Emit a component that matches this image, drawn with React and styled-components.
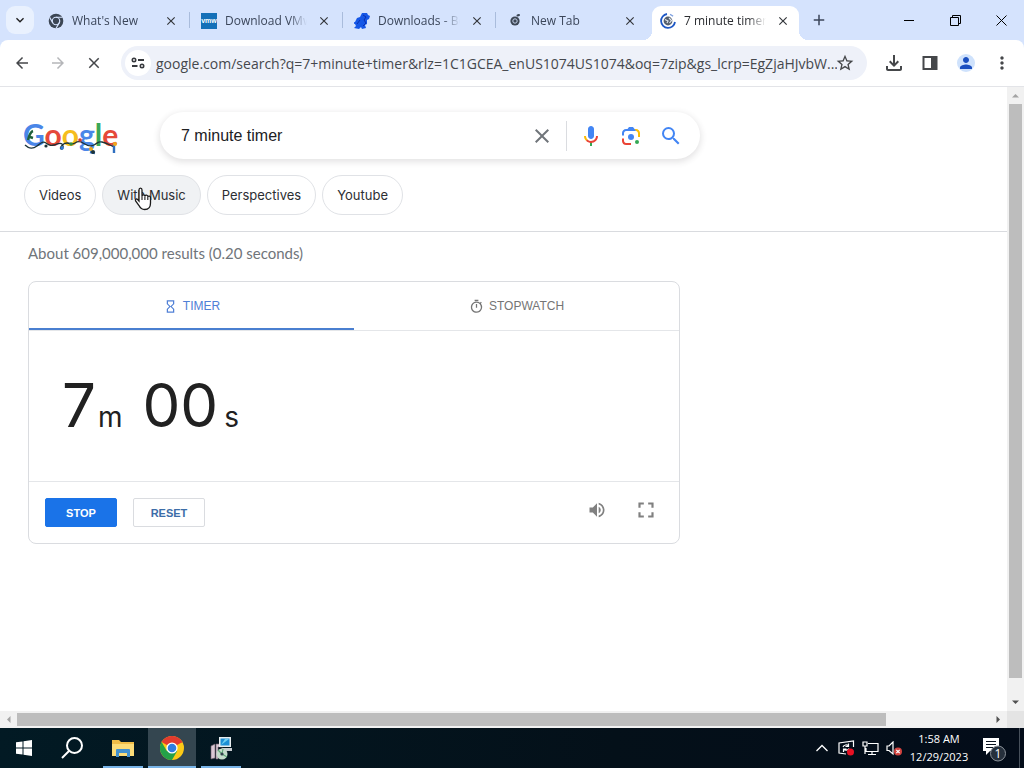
import React, { useState } from 'react';
import styled, { createGlobalStyle, css } from 'styled-components';
import {
  MdArrowBack, MdArrowForward, MdClose, MdStarBorder, MdOutlineFileDownload, MdPerson, MdMoreVert,
  MdSearch, MdHourglassEmpty, MdOutlineTimer, MdVolumeUp, MdFullscreen, MdExpandMore, MdAdd,
} from 'react-icons/md';

const GlobalStyle = createGlobalStyle`
  * { box-sizing: border-box; }
  body { margin: 0; background: #fff; font-family: "Liberation Sans", Arial, sans-serif; }
  button, input { font: inherit; color: inherit; border: 0; padding: 0; margin: 0; background: none; outline: none; }
  svg { display: block; flex: none; }
`;

const Screen = styled.div`
  display: flex;
  flex-direction: column;
  min-height: 100vh;
`;

const IconButton = styled.button`
  display: flex;
  align-items: center;
  justify-content: center;
  flex: none;
  width: ${props => props.$size || 28}px;
  height: ${props => props.$size || 28}px;
  color: ${props => props.$color || '#45474a'};
`;

/* tab strip */

const TabStrip = styled.header`
  display: flex;
  align-items: center;
  height: 40px;
  padding-left: 6px;
  background: #d5e3fd;
  font-family: "Open Sans", "Noto Sans", sans-serif;
  font-size: 12px;
`;

const TabSearch = styled(IconButton)`
  margin-right: 3px;
  border-radius: 9px;
  background: #e9f1fe;
  color: #1f1f1f;
`;

const NewTabButton = styled(IconButton)`
  margin-left: 3px;
  color: #3b465a;
`;

const Tab = styled.div`
  position: relative;
  display: flex;
  align-items: center;
  flex: 0 1 153px;
  min-width: 0;
  height: 34px;
  margin-top: 6px;
  padding: 0 11px 5px;
  color: #3b465a;

  ${props => props.$line && css`
    &::after {
      content: '';
      position: absolute;
      right: 0;
      top: 6px;
      width: 1px;
      height: 16px;
      background: #a9bcdc;
    }
  `}

  ${props => props.$active && css`
    margin-left: 3px;
    margin-right: 3px;
    flex-basis: 147px;
    padding: 0 8px 5px;
    border-radius: 9px 9px 0 0;
    background: #fff;
    color: #2b2d31;

    &::before, &::after {
      content: '';
      position: absolute;
      bottom: 0;
      width: 9px;
      height: 9px;
    }
    &::before {
      left: -9px;
      background: radial-gradient(circle at 0 0, transparent 9px, #fff 9px);
    }
    &::after {
      right: -9px;
      background: radial-gradient(circle at 100% 0, transparent 9px, #fff 9px);
    }
  `}
`;

const TabTitle = styled.span`
  flex: 1;
  min-width: 0;
  margin: 0 9px 0 8px;
  overflow: hidden;
  white-space: nowrap;
  line-height: 18px;
  mask-image: linear-gradient(to right, #000 calc(100% - 18px), transparent);
`;

const WindowControls = styled.div`
  display: flex;
  margin-left: auto;
`;

const WindowButton = styled.button`
  display: flex;
  align-items: center;
  justify-content: center;
  width: 46px;
  height: 40px;
`;

/* toolbar */

const ToolbarBack = styled.div`
  background: #d5e3fd;
`;

const Toolbar = styled.nav`
  display: flex;
  align-items: center;
  gap: 8px;
  height: 47px;
  padding: 0 8px;
  border-bottom: 1px solid #e3e4e8;
  border-radius: 8px 8px 0 0;
  background: #fff;
`;

const Omnibox = styled.div`
  display: flex;
  align-items: center;
  flex: 1;
  min-width: 0;
  height: 34px;
  margin: 0 5px;
  padding: 0 14px 0 4px;
  border-radius: 17px;
  background: #eef1f9;
`;

const SiteInfo = styled(IconButton)`
  margin-right: 5px;
  border-radius: 50%;
  background: #fff;
`;

const UrlInput = styled.input`
  flex: 1;
  min-width: 0;
  height: 24px;
  color: #45484d;
  font-family: "Open Sans", "Noto Sans", sans-serif;
  font-size: 14px;
`;

const Avatar = styled.span`
  width: 18px;
  height: 18px;
  border-radius: 50%;
  background: #cfe2fc;
  color: #1b4fc0;
`;

/* page with its scrollbars */

const Viewport = styled.div`
  display: grid;
  grid-template-columns: minmax(0, 1fr) 17px;
  grid-template-rows: 1fr 17px;
  flex: 1;
`;

const Page = styled.main`
  min-width: 0;
`;

const ScrollTrack = styled.div`
  display: flex;
  flex-direction: ${props => (props.$vertical ? 'column' : 'row')};
  background: #f1f1f1;
`;

const ScrollArrow = styled.button`
  display: flex;
  align-items: center;
  justify-content: center;
  flex: none;
  width: 17px;
  height: 17px;
  color: ${props => (props.$dim ? '#a3a3a3' : '#505050')};
`;

const ScrollLane = styled.div`
  display: flex;
  flex-direction: ${props => (props.$vertical ? 'column' : 'row')};
  flex: 1;
  padding: ${props => (props.$vertical ? '0 2px' : '2px 0')};
`;

const ScrollThumb = styled.div`
  flex: 0 0 ${props => props.$length};
  background: #bdbdbd;
`;

const ScrollCorner = styled.div`
  background: #e4e4e4;
`;

/* search header */

const SearchHeader = styled.div`
  padding: 25px 24px 16px;
  border-bottom: 1px solid #d9dbdf;
`;

const SearchRow = styled.div`
  display: flex;
  align-items: center;
`;

const LogoLink = styled.a`
  flex: none;
  width: 96px;
  margin-right: 40px;
`;

const SearchBox = styled.form`
  display: flex;
  align-items: center;
  flex: 0 1 540px;
  height: 47px;
  padding: 0 17px 0 21px;
  border-radius: 24px;
  background: #fff;
  box-shadow: 0 2px 6px 1px rgba(64, 60, 67, 0.14);
`;

const SearchInput = styled.input`
  flex: 1;
  min-width: 0;
  height: 34px;
  color: #202124;
  font-size: 16px;
`;

const SearchDivider = styled.span`
  width: 1px;
  height: 30px;
  margin: 0 12px;
  background: #dadce0;
`;

const SearchTools = styled.div`
  display: flex;
  gap: 16px;
`;

const Chips = styled.div`
  display: flex;
  gap: 6px;
  margin-top: 16px;
`;

const Chip = styled.a`
  position: relative;
  height: 40px;
  padding: 0 14px;
  border: 1px solid #e0e2e6;
  border-radius: 20px;
  background: ${props => (props.$hover ? '#f0f2f4' : '#fff')};
  color: #2c2e32;
  font-family: Inter, sans-serif;
  font-size: 13px;
  line-height: 38px;
  text-decoration: none;
  white-space: nowrap;
`;

const HandPointer = styled.svg`
  position: absolute;
  left: 31px;
  top: 11px;
`;

/* results */

const Results = styled.section`
  padding: 12px 28px;
`;

const Stats = styled.p`
  margin: 0 0 18px;
  color: #70757a;
  font-family: Lato, sans-serif;
  font-size: 15px;
  line-height: 19px;
`;

const Card = styled.div`
  max-width: 652px;
  border: 1px solid #dadce0;
  border-radius: 8px;
`;

const CardTabs = styled.div`
  display: flex;
  border-bottom: 1px solid #e4e6e9;
`;

const CardTab = styled.button`
  display: flex;
  align-items: center;
  justify-content: center;
  gap: 5px;
  flex: 1;
  height: 48px;
  padding-top: 2px;
  border-bottom: 2px solid ${props => (props.$active ? '#4a7fd0' : 'transparent')};
  color: ${props => (props.$active ? '#5080d6' : '#757575')};
  font-size: 12px;
`;

const Clock = styled.div`
  display: flex;
  align-items: baseline;
  height: 150px;
  padding: 38px 33px 0;
  color: #212121;
  font-family: Inter, sans-serif;
`;

const Digits = styled.span`
  font-size: 60px;
  line-height: 72px;
`;

const Unit = styled.span`
  margin: ${props => (props.$last ? '0 0 0 6px' : '0 20px 0 2px')};
  font-size: 28px;
`;

const Controls = styled.div`
  display: flex;
  align-items: flex-start;
  gap: 16px;
  padding: 16px;
  border-top: 1px solid #e4e6e9;
`;

const ActionButton = styled.button`
  width: 72px;
  height: 29px;
  border: 1px solid ${props => (props.$primary ? '#1a73e8' : '#dadce0')};
  border-radius: 2px;
  background: ${props => (props.$primary ? '#1a73e8' : '#fff')};
  color: ${props => (props.$primary ? '#fff' : '#3c6da8')};
  font-size: 11px;
  font-weight: bold;
`;

const CardTools = styled.div`
  display: flex;
  gap: 25px;
  margin-left: auto;
  margin-right: 5px;
`;

/* taskbar */

const Taskbar = styled.footer`
  display: flex;
  height: 40px;
  background: linear-gradient(to right, #021a24, #041019 60%, #030c19);
  color: #fff;
`;

const TaskButton = styled.button`
  display: flex;
  align-items: center;
  justify-content: center;
  width: 48px;
  height: 40px;
`;

const AppButton = styled(TaskButton)`
  margin-left: 1px;
  background: ${props => (props.$active ? '#344650' : 'none')};
  box-shadow: inset 0 -2px 0 ${props => (props.$active ? '#78b4e8' : 'transparent')};

  ${props => !props.$active && css`
    background: linear-gradient(#78b4e8, #78b4e8) center bottom / 40px 2px no-repeat;
  `}
`;

const Apps = styled.div`
  display: flex;
  margin-left: 2px;
`;

const Tray = styled.div`
  display: flex;
  align-items: center;
  margin-left: auto;
`;

const TrayButton = styled.button`
  display: flex;
  align-items: center;
  justify-content: center;
  width: 24px;
  height: 40px;
`;

const DateTime = styled.div`
  width: 66px;
  font-family: "Open Sans", "Noto Sans", sans-serif;
  font-size: 11px;
  line-height: 18px;
  text-align: center;
`;

const Notices = styled(TaskButton)`
  width: 47px;
  padding: 2px 3px 0 0;
`;

const ShowDesktop = styled.button`
  width: 5px;
  height: 40px;
  border-left: 1px solid #47505b;
`;

const ChromeGlyph = () => (
  <svg width="16" height="16" viewBox="0 0 24 24">
    <circle cx="12" cy="12" r="11" fill="#3c4654" />
    <circle cx="12" cy="12" r="5.6" fill="none" stroke="#d5e3fd" strokeWidth="1.8" />
    <path d="M12 6.4h10M7.2 14.8 2.4 6.4M16.8 14.8l-4.9 8.4" stroke="#d5e3fd" strokeWidth="1.8" />
  </svg>
);

const VmwareGlyph = () => (
  <svg width="16" height="16" viewBox="0 0 16 16">
    <rect width="16" height="16" fill="#1470b8" />
    <text x="8" y="10" textAnchor="middle" fill="#fff" fontFamily="Liberation Sans" fontWeight="bold" fontSize="7">vmw</text>
  </svg>
);

const FigureGlyph = () => (
  <svg width="16" height="16" viewBox="0 0 16 16">
    <path d="M8 0h5l1 2 2 1-1 3-2 1v4l-2 1 1 3-4 1-1-2-2 2-5-1 2-2-1-2-3-1 3-1 2-4 3-1z" fill="#1557e6" />
    <path d="M9 2l3 2-2 3 2 3-3 3M6 7l-3 4" stroke="#0a2fb0" strokeWidth="1" fill="none" />
  </svg>
);

const NewTabGlyph = () => (
  <svg width="16" height="16" viewBox="0 0 16 16">
    <circle cx="8" cy="8" r="4.6" fill="#3c4654" />
    <circle cx="8" cy="8" r="2.2" fill="none" stroke="#c6d3ec" />
    <path d="M10.5 2.5 12 2" stroke="#3c4654" strokeWidth="2" strokeLinecap="round" />
  </svg>
);

const LoadingGlyph = () => (
  <svg width="16" height="16" viewBox="0 0 16 16">
    <path d="M7 1a7 7 0 1 0 8 8" fill="none" stroke="#1d57c4" strokeWidth="1.8" />
    <path d="M10 1.3a7 7 0 0 1 3 2" fill="none" stroke="#7c9fe0" strokeWidth="1.4" />
    <circle cx="8" cy="8" r="4.4" fill="#56606e" />
    <path d="M5 6.5 8 8l-1 2M9 5l2.5 2.5L9.5 10" stroke="#dfe4ea" strokeWidth="1.2" fill="none" />
  </svg>
);

const TuneGlyph = () => (
  <svg width="14" height="12" viewBox="0 0 14 12" fill="none" stroke="#37393d" strokeWidth="1.8">
    <circle cx="3" cy="3" r="1.7" strokeWidth="1.6" />
    <path d="M7 3h6M1 9h5.5" />
    <circle cx="11" cy="9" r="1.7" strokeWidth="1.6" />
  </svg>
);

const SidePanelGlyph = () => (
  <svg width="16" height="14" viewBox="0 0 16 14">
    <rect x="1.5" y="1" width="13" height="12" fill="none" stroke="#45474a" strokeWidth="2" />
    <rect x="9" y="1" width="6" height="12" fill="#45474a" />
  </svg>
);

const MicGlyph = () => (
  <svg width="24" height="24" viewBox="0 0 24 24">
    <path fill="#4285f4" d="m12 15c1.66 0 3-1.31 3-2.97v-7.02c0-1.66-1.34-3.01-3-3.01s-3 1.34-3 3.01v7.02c0 1.66 1.34 2.97 3 2.97z" />
    <path fill="#34a853" d="m11 18.08h2v3.92h-2z" />
    <path fill="#fbbc04" d="m7.05 16.87c-1.27-1.33-2.05-2.83-2.05-4.87h2c0 1.45 0.56 2.42 1.47 3.38v0.32l-1.15 1.18z" />
    <path fill="#ea4335" d="m12 16.93a4.97 5.25 0 0 1 -3.54 -1.55l-1.41 1.49c1.26 1.34 3.02 2.13 4.95 2.13 3.87 0 6.99-2.92 6.99-7h-1.99c0 2.92-2.24 4.93-5 4.93z" />
  </svg>
);

const LensGlyph = () => (
  <svg width="24" height="24" viewBox="0 0 192 192">
    <circle fill="#34a853" cx="144" cy="144" r="16" />
    <circle fill="#4285f4" cx="96" cy="104" r="24" />
    <path fill="#ea4335" d="M24,135.2c0,18.11,14.69,32.8,32.8,32.8H96v-16l-40.1-0.1c-8.8,0-15.9-8.19-15.9-17.9v-18H24V135.2z" />
    <path fill="#fbbc04" d="M168,72.8c0-18.11-14.69-32.8-32.8-32.8H116l20,16c8.8,0,16,8.29,16,18v30h16V72.8z" />
    <path fill="#4285f4" d="M112,24l-32,0L68,40H56.8C38.69,40,24,54.69,24,72.8V92h16V74c0-9.71,7.2-18,16-18h80L112,24z" />
  </svg>
);

const HolidayLogo = () => (
  <svg width="96" height="40" viewBox="0 0 96 40" role="img" aria-label="Google">
    <text x="-1" y="30" fontFamily="Lato, sans-serif" fontWeight="bold" fontSize="30">
      <tspan fill="#4a86e8">G</tspan>
      <tspan fill="#e5493a">o</tspan>
      <tspan fill="#f5bd1c">o</tspan>
      <tspan fill="#4a86e8">g</tspan>
      <tspan fill="#3aa757">l</tspan>
      <tspan fill="#e5493a">e</tspan>
    </text>
    <path
      d="M1 29c4 4 8 4 12 1s6-5 9-3 4 3 8 2 6-3 8-1 1 6-1 5 2-6 6-6 5 2 8 0 5-2 8 0 7 4 11 2 4-4 8-3 6 2 8 3l4 2"
      fill="none" stroke="#1d3338" strokeWidth="1.3"
    />
    <path d="M4 24c1-4 2-8 5-9M6 21l3 1" stroke="#20603c" strokeWidth="2.4" fill="none" />
    <path d="M90 28v9M66 36l5 1" stroke="#2f6fc0" strokeWidth="2.4" />
    <circle cx="38" cy="32" r="1.8" fill="#2f7bd6" />
    <circle cx="22" cy="30" r="1.6" fill="#1d3338" />
    <circle cx="47" cy="28" r="1.8" fill="#35903f" />
    <circle cx="56" cy="24" r="1.8" fill="#d33b2c" />
    <circle cx="67" cy="33" r="2" fill="#f0a81c" />
    <circle cx="69" cy="36" r="2" fill="#1d3338" />
    <circle cx="91" cy="28" r="2" fill="#f0a81c" />
  </svg>
);

const Hand = () => (
  <HandPointer width="20" height="24" viewBox="0 0 20 24">
    <path
      d="M5 14V3c0-2.6 3-2.6 3 0v6c.3-1.7 2.9-1.6 2.9.2.5-1.5 2.9-1.3 2.9.6.6-1.2 2.7-.9 2.7.9v5.3c0 4-2 6.5-5.8 6.5-3 0-4.500-1.500-5.700-4L1.600 14c-.7-1.700.8-2.700 2-1.500z"
      fill="#fff" stroke="#1b1b1b" strokeWidth="1.3"
    />
    <path d="M8 9v4M10.900 9.500V13M13.800 10v3" stroke="#1b1b1b" strokeWidth="1.1" />
  </HandPointer>
);

const ChromeLogo = () => (
  <svg width="24" height="24" viewBox="0 0 24 24">
    <circle cx="12" cy="12" r="12" fill="#fbc916" />
    <path d="M12 12 1.6 6A12 12 0 0 1 22.4 6z" fill="#e33b2e" />
    <path d="M1.6 6A12 12 0 0 0 12 24l5.200-9L12 12 6.800 15z" fill="#24a148" />
    <path d="M12 6.5h10.600L22.400 6 12 4z" fill="#e33b2e" />
    <circle cx="12" cy="12" r="5.6" fill="#fff" />
    <circle cx="12" cy="12" r="4.3" fill="#2f7de1" />
  </svg>
);

const FolderLogo = () => (
  <svg width="22" height="20" viewBox="0 0 22 20">
    <path d="M0 2h7l2 2h13v14H0z" fill="#f0bd48" />
    <path d="M0 6h22v12H0z" fill="#fcdc78" />
    <path d="M4 19v-7q0-1 1-1h12q1 0 1 1v7h-3v-4H7v4z" fill="#4291cf" />
  </svg>
);

const InstallerLogo = () => (
  <svg width="24" height="24" viewBox="0 0 24 24">
    <path d="M2 10l4-2v14l-4 1zM7 8h7v3H9v12H7z" fill="#d9c8d4" stroke="#70606c" strokeWidth=".6" />
    <rect x="10" y="1" width="12" height="10" fill="#e8eef0" />
    <rect x="11.5" y="2.5" width="9" height="7" fill="#1c8fd6" />
    <path d="M12 9l4-6h4z" fill="#6fd0f2" />
    <path d="M12 12h11v3h-6z" fill="#c8ccd0" />
    <circle cx="13" cy="18" r="5.5" fill="#c4dccb" />
    <path d="M13 18l-4-4M13 18l5 3M13 18l1-5" stroke="#5fa878" strokeWidth="1.2" />
    <circle cx="13" cy="18" r="1.6" fill="#34444c" />
  </svg>
);

const Arrow = ({ turn }) => (
  <svg width="7" height="7" viewBox="0 0 7 7">
    <path d="M0 5.5 3.5 2 7 5.5z" fill="currentColor" transform={`rotate(${turn} 3.5 3.5)`} />
  </svg>
);

const TABS = [
  { title: "What's New", icon: <ChromeGlyph />, line: true },
  { title: 'Download VMware', icon: <VmwareGlyph />, line: true },
  { title: 'Downloads - Bochs', icon: <FigureGlyph />, line: true },
  { title: 'New Tab', icon: <NewTabGlyph /> },
  { title: '7 minute timer - Google', icon: <LoadingGlyph />, active: true },
];

const CHIPS = ['Videos', 'With Music', 'Perspectives', 'Youtube'];

const URL_TEXT = 'google.com/search?q=7+minute+timer&rlz=1C1GCEA_enUS1074US1074&oq=7zip&gs_lcrp=EgZjaHJvbW...';

const BrowserTabs = () => (
  <TabStrip>
    <TabSearch aria-label="Search tabs"><MdExpandMore size={16} /></TabSearch>
    {TABS.map(tab => (
      <Tab key={tab.title} $active={tab.active} $line={tab.line}>
        {tab.icon}
        <TabTitle>{tab.title}</TabTitle>
        <IconButton $size={16} $color="#33363b" aria-label="Close tab"><MdClose size={14} /></IconButton>
      </Tab>
    ))}
    <NewTabButton aria-label="New tab"><MdAdd size={18} /></NewTabButton>
    <WindowControls>
      <WindowButton aria-label="Minimize">
        <svg width="10" height="10"><path d="M0 5.5h10" stroke="#000" /></svg>
      </WindowButton>
      <WindowButton aria-label="Restore">
        <svg width="11" height="11" fill="none" stroke="#000"><path d="M.5 2.5h8v8h-8zM2.5 2.5v-2h8v8h-2" /></svg>
      </WindowButton>
      <WindowButton aria-label="Close">
        <svg width="11" height="11"><path d="M.5.5l10 10M10.5.5l-10 10" stroke="#000" /></svg>
      </WindowButton>
    </WindowControls>
  </TabStrip>
);

const BrowserToolbar = () => (
  <ToolbarBack>
    <Toolbar>
      <IconButton aria-label="Back"><MdArrowBack size={18} /></IconButton>
      <IconButton $color="#b5b6b9" aria-label="Forward"><MdArrowForward size={18} /></IconButton>
      <IconButton aria-label="Stop loading"><MdClose size={18} /></IconButton>
      <Omnibox>
        <SiteInfo $size={26} aria-label="Site information"><TuneGlyph /></SiteInfo>
        <UrlInput aria-label="Address" defaultValue={URL_TEXT} />
        <IconButton $size={16} aria-label="Bookmark"><MdStarBorder size={20} /></IconButton>
      </Omnibox>
      <IconButton aria-label="Downloads"><MdOutlineFileDownload size={24} /></IconButton>
      <IconButton aria-label="Side panel"><SidePanelGlyph /></IconButton>
      <IconButton aria-label="Profile"><Avatar><MdPerson size={18} /></Avatar></IconButton>
      <IconButton aria-label="Menu"><MdMoreVert size={20} /></IconButton>
    </Toolbar>
  </ToolbarBack>
);

const SearchArea = () => {
  const [query, setQuery] = useState('7 minute timer');

  return (
    <SearchHeader>
      <SearchRow>
        <LogoLink href="#home"><HolidayLogo /></LogoLink>
        <SearchBox onSubmit={e => e.preventDefault()}>
          <SearchInput aria-label="Search" value={query} onChange={e => setQuery(e.target.value)} />
          <IconButton type="button" $size={24} $color="#70757a" aria-label="Clear" onClick={() => setQuery('')}>
            <MdClose size={24} />
          </IconButton>
          <SearchDivider />
          <SearchTools>
            <IconButton type="button" $size={24} aria-label="Search by voice"><MicGlyph /></IconButton>
            <IconButton type="button" $size={24} aria-label="Search by image"><LensGlyph /></IconButton>
            <IconButton $size={24} $color="#4285f4" aria-label="Search"><MdSearch size={24} /></IconButton>
          </SearchTools>
        </SearchBox>
      </SearchRow>
      <Chips>
        {CHIPS.map(chip => (
          <Chip key={chip} href="#search" $hover={chip === 'With Music'}>
            {chip}
            {chip === 'With Music' && <Hand />}
          </Chip>
        ))}
      </Chips>
    </SearchHeader>
  );
};

const TimerCard = () => {
  const [mode, setMode] = useState('timer');

  return (
    <Card>
      <CardTabs role="tablist">
        <CardTab role="tab" aria-selected={mode === 'timer'} $active={mode === 'timer'} onClick={() => setMode('timer')}>
          <MdHourglassEmpty size={15} />
          TIMER
        </CardTab>
        <CardTab role="tab" aria-selected={mode === 'stopwatch'} $active={mode === 'stopwatch'} onClick={() => setMode('stopwatch')}>
          <MdOutlineTimer size={15} />
          STOPWATCH
        </CardTab>
      </CardTabs>
      <Clock role="timer">
        <Digits>7</Digits><Unit>m</Unit>
        <Digits>00</Digits><Unit $last>s</Unit>
      </Clock>
      <Controls>
        <ActionButton $primary>STOP</ActionButton>
        <ActionButton>RESET</ActionButton>
        <CardTools>
          <IconButton $size={24} $color="#808080" aria-label="Sound"><MdVolumeUp size={20} /></IconButton>
          <IconButton $size={24} $color="#808080" aria-label="Full screen"><MdFullscreen size={26} /></IconButton>
        </CardTools>
      </Controls>
    </Card>
  );
};

const SystemTaskbar = () => (
  <Taskbar>
    <TaskButton aria-label="Start">
      <svg width="16" height="16" fill="#fff"><path d="M0 2.3l6.5-.9v6.1H0zM7.5 1.2 16 0v7.5H7.5zM0 8.5h6.5v6.1L0 13.700zM7.5 8.5H16V16l-8.5-1.2z" /></svg>
    </TaskButton>
    <TaskButton aria-label="Search">
      <svg width="22" height="22" fill="none" stroke="#fff" strokeWidth="2"><circle cx="13.5" cy="8.5" r="7.5" /><path d="M8 14l-7 7" /></svg>
    </TaskButton>
    <Apps>
      <AppButton aria-label="File Explorer"><FolderLogo /></AppButton>
      <AppButton $active aria-label="Google Chrome"><ChromeLogo /></AppButton>
      <AppButton aria-label="Installer"><InstallerLogo /></AppButton>
    </Apps>
    <Tray>
      <TrayButton aria-label="Show hidden icons">
        <svg width="12" height="8" fill="none" stroke="#fff" strokeWidth="1.3"><path d="M.5 7 6 1.5 11.5 7" /></svg>
      </TrayButton>
      <TrayButton aria-label="Updates">
        <svg width="17" height="16" fill="none" stroke="#fff" strokeWidth="1.2">
          <path d="M15.5 7V1L1 3v10l7 1M5 7c1-2.5 4-2.5 5.5-1M10.5 3.5v3h-3M11 8.5c-1 2-4 2-5.5.5M5.5 12V9h3" />
          <circle cx="12.5" cy="12" r="3.5" fill="#e81123" stroke="none" />
        </svg>
      </TrayButton>
      <TrayButton aria-label="Network">
        <svg width="17" height="15" fill="none" stroke="#fff" strokeWidth="1.2">
          <path d="M6 2.5h10v8H4V7M10 10.5v3M6 13.5h8M1 1h4v4H1zM3 5v8" />
        </svg>
      </TrayButton>
      <TrayButton aria-label="Volume">
        <svg width="17" height="15" fill="none" stroke="#fff" strokeWidth="1.2">
          <path d="M1 5h2l4-4v12L3 9.5H1z" />
          <circle cx="12" cy="10.5" r="4" fill="#d2433f" stroke="none" />
          <path d="M10.3 8.8l3.4 3.4M13.7 8.8l-3.4 3.4" />
        </svg>
      </TrayButton>
      <DateTime>1:58 AM<br />12/29/2023</DateTime>
      <Notices aria-label="Notifications">
        <svg width="26" height="25" viewBox="0 0 26 25">
          <path d="M2 1h16v13H9l-4 4v-4H2z" fill="#fff" />
          <path d="M5 4.5h10M5 7.5h10M5 10.5h7" stroke="#0a1420" strokeWidth="1.2" />
          <circle cx="17" cy="16.500" r="7.5" fill="#26303c" stroke="#8b929a" />
          <text x="17" y="21" textAnchor="middle" fill="#fff" fontFamily="Open Sans" fontSize="12">1</text>
        </svg>
      </Notices>
      <ShowDesktop aria-label="Show desktop" />
    </Tray>
  </Taskbar>
);

const App = () => (
  <Screen>
    <GlobalStyle />
    <BrowserTabs />
    <BrowserToolbar />
    <Viewport>
      <Page>
        <SearchArea />
        <Results>
          <Stats>About 609,000,000 results (0.20 seconds)</Stats>
          <TimerCard />
        </Results>
      </Page>
      <ScrollTrack $vertical>
        <ScrollArrow $dim aria-label="Scroll up"><Arrow turn={0} /></ScrollArrow>
        <ScrollLane $vertical><ScrollThumb $length="calc(100% - 16px)" /></ScrollLane>
        <ScrollArrow aria-label="Scroll down"><Arrow turn={180} /></ScrollArrow>
      </ScrollTrack>
      <ScrollTrack>
        <ScrollArrow $dim aria-label="Scroll left"><Arrow turn={-90} /></ScrollArrow>
        <ScrollLane><ScrollThumb $length="calc(100% - 104px)" /></ScrollLane>
        <ScrollArrow aria-label="Scroll right"><Arrow turn={90} /></ScrollArrow>
      </ScrollTrack>
      <ScrollCorner />
    </Viewport>
    <SystemTaskbar />
  </Screen>
);

export default App;
